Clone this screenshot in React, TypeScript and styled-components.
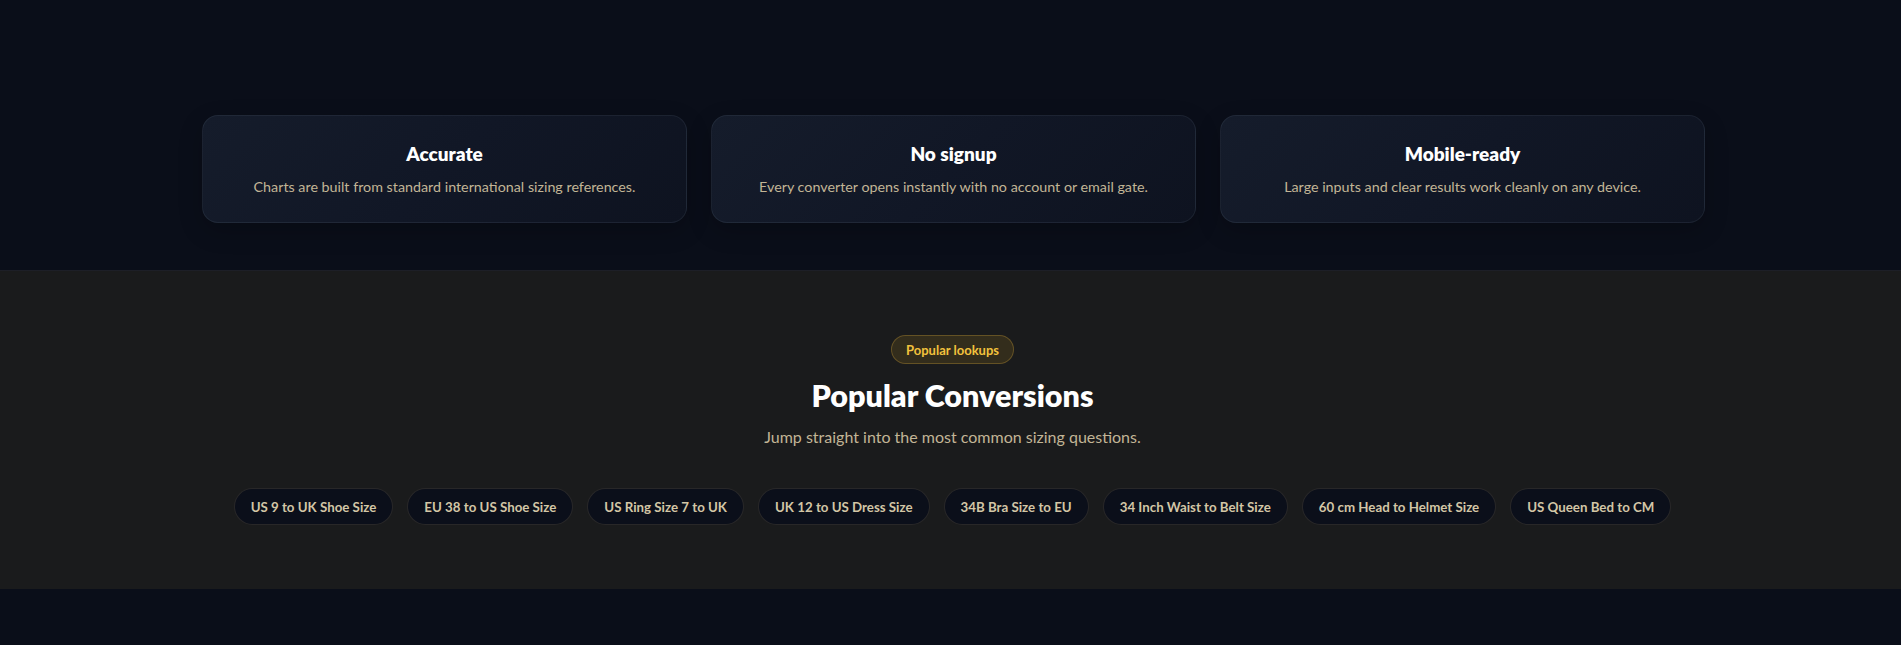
import React from "react";
import styled, { createGlobalStyle } from "styled-components";

const GlobalStyle = createGlobalStyle`
  html, body {
    margin: 0;
    padding: 0;
    background: #0a0e19;
    font-family: Lato, "Open Sans", Arial, sans-serif;
    -webkit-font-smoothing: antialiased;
  }
  * {
    box-sizing: border-box;
  }
`;

const FeatureSection = styled.section`
  background: #0a0e19;
  padding: 115px 0 47px;
`;

const FeatureGrid = styled.div`
  display: grid;
  grid-template-columns: repeat(3, 1fr);
  gap: 24px;
  max-width: 1503px;
  margin: 0 auto;
  transform: translateX(3px);
`;

const FeatureCard = styled.div`
  height: 108px;
  border-radius: 16px;
  border: 1px solid rgba(148, 163, 184, 0.1);
  background: linear-gradient(135deg, #151c2b 0%, #111726 50%, #0e1320 100%);
  box-shadow: 0 8px 24px rgba(0, 0, 0, 0.2);
  display: flex;
  flex-direction: column;
  align-items: center;
  padding-top: 24px;
  text-align: center;
`;

const CardTitle = styled.h3`
  margin: 0;
  font-size: 19px;
  line-height: 28px;
  font-weight: 800;
  color: #ffffff;
`;

const CardText = styled.p`
  margin: 9px 0 0;
  font-size: 14.3px;
  line-height: 20px;
  color: #c2b596;
`;

const PopularSection = styled.section`
  background: #1a1b1c;
  border-top: 1px solid #1d1f27;
  padding: 64px 0 64px;
  display: flex;
  flex-direction: column;
  align-items: center;
`;

const Badge = styled.span`
  display: inline-flex;
  align-items: center;
  height: 29px;
  padding: 0 14px;
  border-radius: 999px;
  background: rgba(202, 154, 30, 0.14);
  border: 1px solid rgba(214, 170, 60, 0.3);
  color: #f2c23c;
  font-size: 13px;
  font-weight: 700;
  transform: translateX(2px);
`;

const Heading = styled.h2`
  margin: 13px 0 0;
  font-size: 30.5px;
  line-height: 36px;
  font-weight: 800;
  color: #ffffff;
  transform: translateX(2px);
`;

const Subtitle = styled.p`
  margin: 12px 0 0;
  font-size: 16px;
  line-height: 24px;
  color: #c2b596;
  transform: translateX(2px);
`;

const PillRow = styled.div`
  display: flex;
  flex-wrap: wrap;
  justify-content: center;
  gap: 14px;
  margin-top: 39px;
  transform: translateX(2px);
`;

const Pill = styled.a`
  display: inline-flex;
  align-items: center;
  height: 37px;
  padding: 0 16px;
  border-radius: 999px;
  background: #0b0f1a;
  border: 1px solid rgba(190, 170, 120, 0.16);
  color: #d3c6a6;
  font-size: 13.3px;
  font-weight: 700;
  text-decoration: none;
  white-space: nowrap;
`;

const BottomSpace = styled.div`
  background: #0a0e19;
  height: 55px;
`;

const features = [
  {
    title: "Accurate",
    text: "Charts are built from standard international sizing references.",
  },
  {
    title: "No signup",
    text: "Every converter opens instantly with no account or email gate.",
  },
  {
    title: "Mobile-ready",
    text: "Large inputs and clear results work cleanly on any device.",
  },
];

const lookups = [
  "US 9 to UK Shoe Size",
  "EU 38 to US Shoe Size",
  "US Ring Size 7 to UK",
  "UK 12 to US Dress Size",
  "34B Bra Size to EU",
  "34 Inch Waist to Belt Size",
  "60 cm Head to Helmet Size",
  "US Queen Bed to CM",
];

export default function App() {
  return (
    <>
      <GlobalStyle />
      <FeatureSection>
        <FeatureGrid>
          {features.map((f) => (
            <FeatureCard key={f.title}>
              <CardTitle>{f.title}</CardTitle>
              <CardText>{f.text}</CardText>
            </FeatureCard>
          ))}
        </FeatureGrid>
      </FeatureSection>
      <PopularSection>
        <Badge>Popular lookups</Badge>
        <Heading>Popular Conversions</Heading>
        <Subtitle>Jump straight into the most common sizing questions.</Subtitle>
        <PillRow>
          {lookups.map((l) => (
            <Pill key={l} href="#">
              {l}
            </Pill>
          ))}
        </PillRow>
      </PopularSection>
      <BottomSpace />
    </>
  );
}
